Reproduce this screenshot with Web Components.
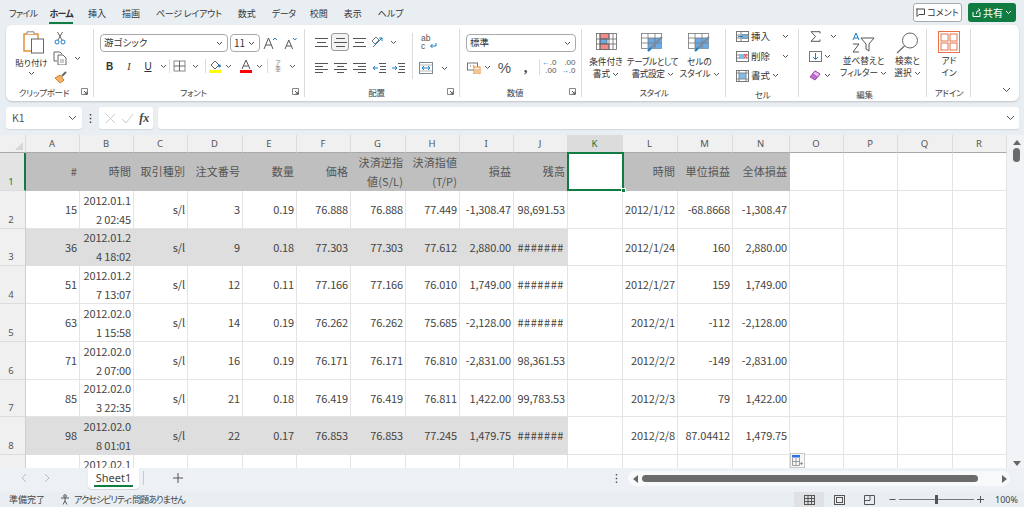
<!DOCTYPE html>
<html lang="ja"><head><meta charset="utf-8"><title>Excel</title>
<style>
html,body{margin:0;padding:0;width:1024px;height:507px;overflow:hidden;background:#e9eef3;font-family:"Noto Sans CJK JP","Noto Sans",sans-serif;color:#333}
body{display:flex;flex-direction:column}
</style></head><body>
<x-menu></x-menu>
<x-ribbon></x-ribbon>
<x-formula></x-formula>
<x-sheet></x-sheet>
<x-tabs></x-tabs>
<x-status></x-status>
<script>
const F='"Noto Sans CJK JP","Noto Sans",sans-serif';
const svg=(w,h,b,extra='')=>`<svg width="${w}" height="${h}" viewBox="0 0 ${w} ${h}" fill="none" stroke="#555" stroke-width="1" ${extra}>${b}</svg>`;
const chev=(c='#555')=>svg(7,5,`<path d="M1 1l2.5 2.5L6 1" stroke="${c}"/>`);
const lines=(ys)=>ys.map(([a,b,y])=>`<path d="M${a} ${y}H${b}"/>`).join('');
const IC={
 paste:svg(22,23,`<rect x="1" y="3" width="14" height="17" fill="#fff" stroke="#e08a2c" stroke-width="1.4"/><path d="M4 3V.8h7V3" stroke="#888" fill="#fff"/><rect x="8.5" y="8" width="12" height="14" fill="#fff" stroke="#666"/>`),
 cut:svg(12,14,`<path d="M3.5 1l4.5 8M8.5 1L4 9" stroke="#666"/><circle cx="3" cy="11" r="2" stroke="#1b7fc4"/><circle cx="9" cy="11" r="2" stroke="#1b7fc4"/>`),
 copy:svg(14,14,`<path d="M4 10H1V1h6l2 2" stroke="#666"/><path d="M5 4h5l3 3v7H5z" fill="#fff" stroke="#666"/><path d="M7 9h4M7 11h4" stroke="#999"/>`),
 brush:svg(14,13,`<path d="M1 7l5-3 4 5-4 3z" fill="#f3b36b" stroke="#d97f22"/><path d="M8 5l4-4" stroke="#666" stroke-width="2"/>`),
 launch:svg(7,7,`<path d="M.5.5h6v6h-6z" stroke="#888"/><path d="M3 3l3 3M6 3.5V6H3.5" stroke="#555"/>`,'style="display:block"'),
 grow:svg(14,14,`<path d="M1 13L5.5 2 10 13M2.8 9h5.4" stroke="#555"/><path d="M10 4l2-2 2 2" stroke="#1b7fc4"/>`),
 shrink:svg(13,14,`<path d="M1 13L4.8 4 8.6 13M2.4 10h4.8" stroke="#555"/><path d="M9 2l1.8 2L12.6 2" stroke="#1b7fc4"/>`),
 border:svg(14,14,`<rect x="1" y="2" width="11" height="10" stroke="#888"/><path d="M6.5 2v10M1 7h11" stroke="#666"/>`),
 fill:svg(14,14,`<path d="M3 6l4-4 4 4-4 4z" stroke="#666"/><circle cx="11.5" cy="7" r="1.4" fill="#1b7fc4" stroke="none"/><rect x="1" y="11" width="12" height="3" fill="#ffff00" stroke="none"/>`),
 fcolor:svg(14,14,`<path d="M3 10L7 1l4 9M4.5 7h5" stroke="#555"/><rect x="1" y="11" width="12" height="3" fill="#f00" stroke="none"/>`),
 top:svg(13,9,lines([[0,13,.5],[2,11,4.5],[0,13,8.5]])),
 mid:svg(13,9,lines([[2,11,.5],[0,13,4.5],[2,11,8.5]])),
 bot:svg(13,9,lines([[0,13,.5],[2,11,4.5],[0,13,8.5]])),
 left:svg(13,10,lines([[0,13,.5],[0,8,3.5],[0,13,6.5],[0,8,9.5]])),
 center:svg(13,10,lines([[0,13,.5],[3,10,3.5],[0,13,6.5],[3,10,9.5]])),
 right:svg(13,10,lines([[0,13,.5],[5,13,3.5],[0,13,6.5],[5,13,9.5]])),
 orient:svg(14,13,`<path d="M2 11L11 2M8 2h3v3" stroke="#1b7fc4"/><path d="M1 5l4-4 3 3-4 4z" stroke="#777"/>`),
 indl:svg(13,10,`<path d="M6 .5h7M7 3.5h6M7 6.5h6M6 9.5h7" /><path d="M0 5h5M2 3L0 5l2 2" stroke="#1b7fc4"/>`),
 indr:svg(13,10,`<path d="M6 .5h7M7 3.5h6M7 6.5h6M6 9.5h7"/><path d="M0 5h5M3 3l2 2-2 2" stroke="#1b7fc4"/>`),
 merge:svg(14,12,`<rect x=".5" y=".5" width="13" height="11" stroke="#7a8a99"/><path d="M3 6h8M3 6l2-2M3 6l2 2M11 6L9 4M11 6L9 8" stroke="#1b7fc4"/><path d="M1 3h12M1 9h12" stroke="#bbb"/>`),
 acct:svg(14,13,`<rect x=".5" y="2" width="10" height="7" stroke="#777"/><path d="M3 5h1M6 5h1" /><rect x="7" y="6" width="6" height="7" fill="#fff" stroke="#e8892a"/><path d="M8 9h4M8 11h4" stroke="#e8892a"/>`),
 cond:`<svg width="21" height="17" viewBox="0 0 21 17" stroke="#666" fill="none" stroke-width=".8"><rect x="4" y="0" width="9" height="6" fill="#f58a8a"/><rect x="4" y="6" width="7" height="5" fill="#6aaae6"/><rect x="4" y="11" width="9" height="5.5" fill="#f58a8a"/><rect x=".5" y=".5" width="20" height="16" /><path d="M4 .5v16M13 .5v16M17 .5v16M.5 6h20M.5 11h20"/></svg>`,
 table:`<svg width="23" height="20" viewBox="0 0 23 20" stroke="#777" fill="none" stroke-width=".8"><rect x=".5" y=".5" width="20" height="15"/><rect x="7" y="5" width="13.5" height="10.5" fill="#6aaae6" stroke="none"/><path d="M.5 5h20M.5 10h20M7 .5v15M14 .5v15"/><path d="M21 4L10 15" stroke="#7a8a99" stroke-width="2.2"/><path d="M10 15l-3 3" stroke="#1b7fc4" stroke-width="2.4"/></svg>`,
 cins:svg(13,11,`<rect x=".5" y=".5" width="12" height="10" stroke="#777"/><rect x="6" y="3" width="6" height="5" fill="#7dbcec" stroke="none"/><path d="M1 4h11M1 7h11M5 1v9" stroke="#888"/><path d="M2 5.5h5" stroke="#1b7fc4"/>`),
 cdel:svg(13,11,`<rect x=".5" y=".5" width="12" height="10" stroke="#777"/><path d="M1 4h11M1 7h11" stroke="#888"/><rect x="3" y="3" width="5" height="5" fill="#7dbcec" stroke="none"/><path d="M8 3l3 4M11 3L8 7" stroke="#e23b3b"/>`),
 cfmt:svg(13,12,`<rect x=".5" y=".5" width="12" height="11" stroke="#777"/><rect x="3" y="3" width="7" height="6" fill="#7dbcec" stroke="none"/><path d="M3 1v10M10 1v10M1 3h11M1 9h11" stroke="#888"/>`),
 sigma:svg(11,11,`<path d="M10 2.5V.7H1l4.5 4.8L1 10.3h9V8.5" stroke="#555"/>`),
 filld:svg(13,11,`<rect x=".5" y=".5" width="12" height="10" stroke="#777"/><path d="M6.5 2v6M4 6l2.5 2.5L9 6" stroke="#1b7fc4"/>`),
 erase:svg(12,11,`<path d="M1 7l5-6 5 3-5 6z" fill="#c16fd0" stroke="#a34fb5"/><path d="M6 1l5 3-2.5 3-5-3z" fill="#e7c4ee" stroke="#a34fb5"/>`),
 sort:`<svg width="23" height="21" viewBox="0 0 23 21" fill="none" stroke-width="1"><path d="M1 8L4 1l3 7M2 6h4" stroke="#1b7fc4"/><path d="M1 12h6L1 20h6" stroke="#555"/><path d="M9 6h13l-5 6v7l-3-2v-5z" stroke="#555"/></svg>`,
 find:`<svg width="23" height="22" viewBox="0 0 23 22" fill="none" stroke="#666"><circle cx="14" cy="8.5" r="7.5"/><path d="M8.5 14L1 21" stroke-width="1.1"/></svg>`,
 addin:`<svg width="22" height="22" viewBox="0 0 22 22" fill="none" stroke="#e8704a" stroke-width="1"><rect x=".5" y=".5" width="21" height="21"/><rect x="3" y="3" width="7" height="7"/><rect x="12" y="3" width="7" height="7"/><rect x="3" y="12" width="7" height="7"/><rect x="12" y="12" width="7" height="7"/></svg>`
};
const def=(n,html)=>customElements.define(n,class extends HTMLElement{constructor(){super();this.attachShadow({mode:'open'}).innerHTML=typeof html==='function'?html(this):html}});

def('x-menu',`<style>
:host{display:flex;height:25px;flex:none;align-items:center;font:9px/1 ${F};color:#333;font-feature-settings:"palt";padding:2px 0 0 1px;box-sizing:border-box}
span{padding:0 8px}
.a{position:relative;font-weight:700;padding:0 7px 0 8px}
.a:after{content:"";position:absolute;left:8px;right:7px;bottom:-6px;height:2px;background:#107c41}
.k{letter-spacing:-.7px}
.sp{flex:1;padding:0}
.c,.s{height:19px;box-sizing:border-box;border-radius:3px;display:flex;align-items:center;justify-content:center;padding:0;gap:2px;margin-top:-2px}
.c{width:49px;background:#fff;border:1px solid #aaa;margin-right:6px}
.s{width:48px;background:#107c41;color:#fff;margin-right:8px;font-size:10px}
svg{display:block}
</style><span class="k" style="padding-right:4px">ファイル</span><span class="a k">ホーム</span><span>挿入</span><span>描画</span><span style="letter-spacing:-.25px">ページ レイアウト</span><span>数式</span><span style="letter-spacing:-.4px;padding-right:6px">データ</span><span>校閲</span><span>表示</span><span>ヘルプ</span><span class="sp"></span>
<span class="c">${svg(9,9,'<path d="M.5 1h8v5.5H3L1 8.5V1z" stroke="#444"/>')}コメント</span>
<span class="s">${svg(9,9,'<path d="M1 4v4.5h7V4M4.5 6C4.5 3 6 2 8 2M6.5.5L8 2 6.5 3.5" stroke="#fff"/>')}共有 ${chev('#fff')}</span>`);

def('x-group',h=>`<style>
:host{display:grid;grid-template-rows:1fr 14px;position:relative;box-sizing:border-box;height:72px;font:9px/1 ${F};font-feature-settings:"palt";color:#333}
:host(:not([nosep])):after{content:"";position:absolute;right:0;top:3px;height:68px;width:1px;background:#dcdcdc}
.l{text-align:center;font-size:8.5px;line-height:14px;color:#444;position:relative;letter-spacing:-.3px;padding-top:1px}
.p{padding-right:12px}
.k{position:absolute;right:6px;top:4px}
</style><div><slot></slot></div><div class="l ${h.hasAttribute('launch')?'p':''}">${h.getAttribute('label')||''}${h.hasAttribute('launch')?`<span class="k">${IC.launch}</span>`:''}</div>`);

const i=(s,w,cls='')=>`<span class="i ${cls}" style="width:${w}px">${s}</span>`;
const sep=h=>`<span class="v" style="height:${h}px"></span>`;
const gapx=w=>`<span style="width:${w}px;flex:none"></span>`;
const big=(ic,a,b,w,ls=0)=>`<div class="big" style="width:${w}px;letter-spacing:${ls}px"><span class="bi">${ic}</span><span>${a}</span><span class="two">${b}</span></div>`;
const dn=`<span class="dc">${chev()}</span>`;
def('x-ribbon',`<style>
:host{display:grid;grid-template-columns:88px 211px 155px 122px 144px 73px 128px 44px 1fr;flex:none;height:76px;margin:0 5px 0 6px;background:#fff;border-radius:6px;box-shadow:0 1px 2px rgba(0,0,0,.18);position:relative;padding-top:1px;box-sizing:border-box}
.i{display:inline-flex;align-items:center;justify-content:center;flex:none}
svg{display:block}
.row{display:flex;align-items:center}
.v{width:1px;background:#dcdcdc;flex:none}
.combo{box-sizing:border-box;height:18px;border:1px solid #aaa;border-radius:4px;display:flex;align-items:center;justify-content:space-between;padding:0 4px 0 3px;font-size:9.5px;flex:none}
.col{display:flex;flex-direction:column}
.big{display:flex;flex-direction:column;align-items:center;line-height:12px;font-size:8.7px;white-space:nowrap;flex:none}
.bi{display:flex;align-items:flex-start;justify-content:center;height:21px;margin-bottom:2px}
.two{display:flex;align-items:center;gap:2px}
.sel{border:1px solid #999;border-radius:3px;height:18px;box-sizing:border-box;background:#f3f3f3}
.c{display:flex;align-items:center;height:19.5px;font-size:9.5px}
.e{display:flex;align-items:flex-end;justify-content:flex-end;padding:0 8px 8px 0;box-sizing:border-box;height:75px}
</style>
<x-group label="クリップボード" launch>
 <div class="row" style="padding:5px 0 0 9px;align-items:flex-start">
  <div class="big" style="width:33px"><span class="bi" style="height:23px;margin:0 0 2px 5px">${IC.paste}</span><span style="font-size:8.5px">貼り付け</span><span style="margin-top:3px">${chev()}</span></div>
  <div class="col" style="margin-left:4px;gap:6px;margin-top:0"><span class="i" style="width:16px;height:14px">${IC.cut}</span><div class="row">${i(IC.copy,16)}${i(chev(),18)}</div><span class="i" style="width:18px">${IC.brush}</span></div>
 </div>
</x-group>
<x-group label="フォント" launch>
 <div class="col" style="padding:8px 0 0 6px;gap:6px">
  <div class="row"><span class="combo" style="width:128px"><span>游ゴシック</span>${chev()}</span><span class="combo" style="width:30px;margin-left:2px"><span style="font-size:10px">11</span>${chev()}</span>${i(IC.grow,20)}${i(IC.shrink,20)}</div>
  <div class="row" style="height:16px;font-size:10px">
   ${i('<b style="font:700 10px Liberation Sans">B</b>',19)}${i('<i style="font:italic 10px Liberation Serif">I</i>',20)}${i('<u style="font:10px Liberation Sans">U</u>',18)}${i(chev(),12)}${sep(14)}${i(IC.border,20)}${i(chev(),10)}${gapx(5)}${sep(14)}${i(IC.fill,18)}${i(chev(),8)}${gapx(5)}${i(IC.fcolor,18)}${i(chev(),8)}${gapx(4)}${sep(14)}${i('<span style="font-size:5.5px;line-height:6.5px;text-align:center;color:#777">ア<br>亜</span>',20)}${i(chev(),8)}
  </div>
 </div>
</x-group>
<x-group label="配置" launch>
 <div class="row" style="padding:7px 0 0 7px;align-items:flex-start">
  <div class="col" style="width:100px;gap:8px;flex:none">
   <div class="row" style="height:18px">${i(IC.top,19)}<span class="i sel" style="width:18px">${IC.mid}</span>${i(IC.bot,20)}${i(IC.orient,18)}${i(chev(),12)}</div>
   <div class="row" style="height:18px">${i(IC.left,19)}${i(IC.center,19)}${i(IC.right,19)}${i(IC.indl,20)}${i(IC.indr,19)}</div>
  </div>
  ${sep(46)}
  <div class="col" style="gap:8px;padding-left:5px">
   <div class="row" style="height:18px;padding-left:3px;align-items:center"><span style="font:8.5px/8px Liberation Sans;color:#555">ab<br>c</span>${svg(8,8,'<path d="M7 1v3H1.5M3.5 2L1.5 4l2 2" stroke="#1b7fc4"/>','style="margin:7px 0 0 -1px"')}</div>
   <div class="row" style="height:18px">${i(IC.merge,16)}${i(chev(),21)}</div>
  </div>
 </div>
</x-group>
<x-group label="数値" launch>
 <div class="col" style="padding:8px 0 0 6px;gap:6px">
  <span class="combo" style="width:110px"><span>標準</span>${chev()}</span>
  <div class="row" style="height:18px">${i(IC.acct,15)}${i(chev(),13)}${i('<span style="font:15px Liberation Sans;color:#555">%</span>',21)}${i('<span style="font:700 15px/10px Liberation Serif;color:#444">,</span>',21)}${gapx(3)}${sep(16)}${i('<span style="font:8px/8px Liberation Sans;color:#555;text-align:right"><span style="color:#1b7fc4">←</span>.0<br>.00</span>',18)}${i('<span style="font:8px/8px Liberation Sans;color:#555;text-align:right">.00<br><span style="color:#1b7fc4">→</span>.0</span>',20)}</div>
 </div>
</x-group>
<x-group label="スタイル">
 <div class="row" style="padding:7px 0 0 1px;align-items:flex-start">
  ${big(IC.cond,'条件付き','書式'+dn,46)}${big(IC.table,'テーブルとして','書式設定'+dn,47,-.4)}${big(IC.table,'セルの','スタイル'+dn,47)}
 </div>
</x-group>
<x-group label="セル">
 <div class="col" style="padding:1px 0 0 9px">
  <div class="c">${i(IC.cins,15)}<span style="width:31px;padding-left:1px">挿入</span>${i(chev(),7)}</div>
  <div class="c">${i(IC.cdel,15)}<span style="width:31px;padding-left:1px">削除</span>${i(chev(),7)}</div>
  <div class="c">${i(IC.cfmt,15)}<span style="padding-left:1px;margin-right:2px">書式</span>${i(chev(),7)}</div>
 </div>
</x-group>
<x-group label="編集">
 <div class="row" style="align-items:flex-start;padding:1px 0 0 9px">
  <div class="col" style="width:38px"><div class="c">${i(IC.sigma,14)}${i(chev(),22)}</div><div class="c">${i(IC.filld,14)}${i(chev(),10)}</div><div class="c">${i(IC.erase,14)}${i(chev(),10)}</div></div>
  <div class="big" style="width:43px;margin:5px 0 0 -4px"><span class="bi">${IC.sort}</span><span>並べ替えと</span><span class="two">フィルター${dn}</span></div>
  <div class="big" style="width:45px;margin:5px 0 0 0"><span class="bi">${IC.find}</span><span>検索と</span><span class="two">選択${dn}</span></div>
 </div>
</x-group>
<x-group label="アドイン">
 <div class="row" style="padding:5px 0 0 0;justify-content:center"><div class="big" style="width:44px"><span class="bi" style="height:22px;margin-bottom:2px">${IC.addin}</span><span>アド</span><span>イン</span></div></div>
</x-group>
<div class="e">${svg(9,6,'<path d="M1 1l3.5 3.5L8 1"/>')}</div>`);

def('x-formula',`<style>
:host{display:flex;flex:none;height:22px;margin:6px 5px 6px 6px;font:10.5px/1 ${F};color:#555;align-items:stretch}
.b{background:#fff;border-radius:3px;box-shadow:0 1px 1px rgba(0,0,0,.1);display:flex;align-items:center}
svg{display:block}
.n{width:76px;padding:0 5px 0 6px;box-sizing:border-box;justify-content:space-between}
.d{width:17px;display:flex;align-items:center;justify-content:center;color:#555}
.x{width:54px;justify-content:space-around;padding:0 1px 0 3px;box-sizing:border-box;}
.f{flex:1;margin-left:5px;justify-content:flex-end;padding-right:4px}
</style>
<div class="b n"><span>K1</span>${svg(9,6,'<path d="M1 1l3.5 3.5L8 1"/>')}</div>
<div class="d">${svg(3,11,'<path d="M1.5 1v1.5M1.5 4.8v1.5M1.5 8.6v1.5" stroke-width="1.5" stroke="#444"/>')}</div>
<div class="b x">${svg(11,11,'<path d="M1 1l9 9M10 1l-9 9" stroke="#ccc"/>')}${svg(13,11,'<path d="M1 6l4 4 7-9" stroke="#ccc"/>')}<span style="font:italic 700 12px Liberation Serif;color:#444">fx</span></div>
<div class="b f">${svg(9,6,'<path d="M1 1l3.5 3.5L8 1"/>')}</div>`);

const W=[54,54,54,55,54,54,55,54,54,54,55,55,55,57,54,54,55,54];
const RH=[18,38,38,37,38,38,38,37,38,40];
const L='ABCDEFGHIJKLMNOPQR'.split('');
const D=[
 ['15','2012.01.1<br>2 02:45','s/l','3','0.19','76.888','76.888','77.449','-1,308.47','98,691.53','','2012/1/12','-68.8668','-1,308.47'],
 ['36','2012.01.2<br>4 18:02','s/l','9','0.18','77.303','77.303','77.612','2,880.00','#######','','2012/1/24','160','2,880.00'],
 ['51','2012.01.2<br>7 13:07','s/l','12','0.11','77.166','77.166','76.010','1,749.00','#######','','2012/1/27','159','1,749.00'],
 ['63','2012.02.0<br>1 15:58','s/l','14','0.19','76.262','76.262','75.685','-2,128.00','#######','','2012/2/1','-112','-2,128.00'],
 ['71','2012.02.0<br>2 07:00','s/l','16','0.19','76.171','76.171','76.810','-2,831.00','98,361.53','','2012/2/2','-149','-2,831.00'],
 ['85','2012.02.0<br>3 22:35','s/l','21','0.18','76.419','76.419','76.811','1,422.00','99,783.53','','2012/2/3','79','1,422.00'],
 ['98','2012.02.0<br>8 01:01','s/l','22','0.17','76.853','76.853','77.245','1,479.75','#######','','2012/2/8','87.04412','1,479.75']
];
const H=['#','時間','取引種別','注文番号','数量','価格','決済逆指<br>値(S/L)','決済指値<br>(T/P)','損益','残高','','時間','単位損益','全体損益'];
def('x-sheet',()=>{
 let g=`<div class="ch corner"><span class="tri"></span></div>`;
 L.forEach((l,c)=>g+=`<div class="ch${c==10?' on':''}">${l}</div>`);
 g+=`<div class="rh act">1</div>`;
 for(let c=0;c<18;c++){
  if(c==10)g+=`<div class="cell sel"></div>`;
  else if(c<14)g+=`<div class="cell hd">${H[c]}</div>`;
  else g+=`<div class="cell"></div>`;
 }
 D.forEach((r,ri)=>{
  g+=`<div class="rh">${ri+2}</div>`;
  for(let c=0;c<18;c++){
   const alt=(ri==1||ri==6)&&c<10;
   const t=c<14?r[c]:'';
   g+=`<div class="cell num${alt?' alt':''}${t[0]=='#'?' hash':''}">${t}</div>`;
  }
 });
 g+=`<div class="rh"></div>`;
 for(let c=0;c<18;c++)g+=`<div class="cell num${c==1?' w9':''}">${c==1?'2012.02.1':''}</div>`;
 return `<style>
:host{display:flex;flex:none;height:333px;overflow:hidden;font:11px/1 ${F};color:#444;position:relative;background:#fff}
.g{display:grid;grid-template-columns:26px ${W.map(w=>w+'px').join(' ')};grid-template-rows:${RH.map(h=>h+'px').join(' ')};width:1007px;flex:none;position:relative;align-content:start}
.ch{background:#f0f0f0;border-right:1px solid #dcdcdc;border-bottom:1px solid #a9a9a9;display:flex;align-items:center;justify-content:center;font-size:9.5px;color:#555;box-sizing:border-box;font-family:"Noto Sans","Noto Sans CJK JP",sans-serif;padding-right:1px}
.ch.on{background:#dcdcdc;color:#107c41}
.corner{position:relative}
.tri{position:absolute;right:2px;bottom:2px;border:0 solid transparent;border-width:0 0 8px 8px;border-bottom-color:#d6d6d6}
.rh{background:#f0f0f0;border-right:1px solid #cfcfcf;border-bottom:1px solid #dcdcdc;display:flex;align-items:flex-end;justify-content:center;font-size:9.5px;color:#555;box-sizing:border-box;padding:0 3px 2px 0;line-height:12px;font-family:"Noto Sans","Noto Sans CJK JP",sans-serif}
.rh.act{border-right:2px solid #107c41;color:#107c41;background:#e3e3e3;padding-right:2px}
.cell{border-right:1px solid #e4e4e4;border-bottom:1px solid #e4e4e4;box-sizing:border-box;display:flex;align-items:center;justify-content:flex-end;padding:0 2px;text-align:right;overflow:hidden;white-space:nowrap;line-height:19px;min-width:0}
.num{letter-spacing:-.15px}
.hash{letter-spacing:.55px;padding-right:3px}
.hd{background:#bfbfbf;color:#555;border-color:#bfbfbf;letter-spacing:.1px}
.alt{background:#dedede;border-right-color:#dedede;border-bottom-color:#dedede}
.w9{align-items:flex-start;line-height:19px}
.sel{position:relative;overflow:visible;background:#fff;border:2px solid #107c41;margin:-1px -1px 0 -1px;padding:0;z-index:1}
.sel:after{content:"";position:absolute;right:-4px;bottom:-4px;width:5px;height:5px;background:#107c41;border:1px solid #fff;box-sizing:border-box}
.qa{position:absolute;left:790px;top:318px;width:15px;height:15px;background:#f6f6f6;border:1px solid #c8c8c8;box-sizing:border-box;z-index:2;display:flex;align-items:center;justify-content:center}
.vs{flex:1;background:#f1f3f6;position:relative;display:flex;flex-direction:column;align-items:center;padding-left:2px;box-sizing:border-box}
.up{margin-top:5px;border:solid transparent;border-width:0 4px 5px;border-bottom-color:#666;width:0;height:0}
.th{margin-top:3px;width:7px;height:14px;border-radius:4px;background:#6b6b6b}
.dn{margin-top:auto;margin-bottom:2px;border:solid transparent;border-width:5px 4px 0;border-top-color:#666;width:0;height:0}
svg{display:block}
</style><div class="g">${g}<div class="qa">${svg(11,11,'<rect x="0" y="0" width="8" height="2.5" fill="#2d6fe0" stroke="none"/><path d="M.5 3v7.5h7V3M.5 6.5h7M4 3v7" stroke="#888" stroke-width=".8"/><path d="M8 8.5h3M9.5 7v3" stroke="#888" stroke-width=".8"/>')}</div></div><div class="vs"><span class="up"></span><span class="th"></span><span class="dn"></span></div>`;
});

def('x-tabs',`<style>
:host{display:flex;flex:none;height:24px;align-items:flex-start;font:11px/1 ${F};color:#444;background:#edf0f4;box-sizing:border-box;position:relative}
.nav{width:88px;height:20px;flex:none;display:flex;align-items:center;padding-left:20px;gap:17px;box-sizing:border-box}
svg{display:block}
.t{width:51px;height:21px;flex:none;background:#fff;border-radius:0 0 4px 4px;box-shadow:0 1px 1px rgba(0,0,0,.12);display:flex;align-items:center;justify-content:center;position:relative;font-family:"Noto Sans","Noto Sans CJK JP",sans-serif;padding-bottom:3px;box-sizing:border-box;font-size:11px}
.t:after{content:"";position:absolute;left:6px;right:6px;bottom:2px;height:2px;background:#107c41}
.s{width:1px;height:14px;background:#c9c9c9;margin:3px 0 0 4px;flex:none}
.p{width:68px;height:20px;display:flex;align-items:center;justify-content:center;flex:none}
.m{flex:1;height:20px;display:flex;align-items:center;justify-content:flex-end;padding-right:1px;box-sizing:border-box}
.h{width:382px;height:15px;margin:3px 14px 0 9px;border-radius:8px;flex:none;display:flex;align-items:center;padding:0 3px 0 5px;box-sizing:border-box;gap:2px;background:#f8f9fb}
.b{flex:none;height:7px;background:#6b6b6b;border-radius:4px;width:336px;margin-left:2px}
.l{border:solid transparent;border-width:4px 5px 4px 0;border-right-color:#666}
.r{border:solid transparent;border-width:4px 0 4px 5px;border-left-color:#666;margin-left:auto}
</style>
<div class="nav">${svg(7,10,'<path d="M6 1L2 5l4 4" stroke="#bbb"/>')}${svg(7,10,'<path d="M1 1l4 4-4 4" stroke="#bbb"/>')}</div>
<div class="t">Sheet1</div><span class="s"></span>
<div class="p">${svg(10,10,'<path d="M5 0v10M0 5h10" stroke="#555"/>')}</div>
<div class="m">${svg(3,11,'<path d="M1.5 1v1.5M1.5 4.8v1.5M1.5 8.6v1.5" stroke-width="1.4" stroke="#555"/>')}</div>
<div class="h"><span class="l"></span><span class="b"></span><span class="r"></span></div>`);

def('x-status',`<style>
:host{display:flex;flex:none;height:15px;align-items:center;font:9px/1 ${F};font-feature-settings:"palt";color:#444;padding-left:9px;box-sizing:border-box}
svg{display:block}
.a{display:flex;align-items:center;margin-left:15px;gap:3px;letter-spacing:-.95px}
.sp{flex:1}
.v{display:flex;align-items:center;justify-content:center;height:15px;flex:none}
.z{margin-left:6px;display:flex;align-items:center;gap:3px}
.tr{width:75px;height:1px;background:#777;position:relative}
.tr:after{content:"";position:absolute;left:36px;top:-4px;width:3px;height:9px;background:#555}
.pc{width:35px;text-align:right;padding-right:6px;box-sizing:border-box;margin-left:2px;font-family:"Noto Sans",sans-serif}
</style>
<span>準備完了</span>
<span class="a">${svg(11,11,'<circle cx="5" cy="2" r="1.3"/><path d="M1 4h8M5 4v3L3 10.5M5 7l2 3.5"/>')}アクセシビリティ: 問題ありません</span>
<span class="sp"></span>
<span class="v" style="width:30px;background:#dfe1e4">${svg(11,10,'<rect x=".5" y=".5" width="10" height="9"/><path d="M.5 3.5h10M.5 6.5h10M4 .5v9M7.5 .5v9"/>')}</span>
<span class="v" style="width:31px">${svg(11,10,'<rect x=".5" y=".5" width="10" height="9"/><rect x="2.5" y="2.5" width="6" height="5"/>')}</span>
<span class="v" style="width:28px">${svg(11,10,'<path d="M.5 9.5V.5h10v9zM6 .5v5H.5"/>')}</span>
<span class="z">${svg(7,3,'<path d="M.5 1.5h6"/>')}<span class="tr"></span>${svg(7,7,'<path d="M3.5 0v7M0 3.5h7"/>')}<span class="pc">100%</span></span>`);
</script>
</body></html>
